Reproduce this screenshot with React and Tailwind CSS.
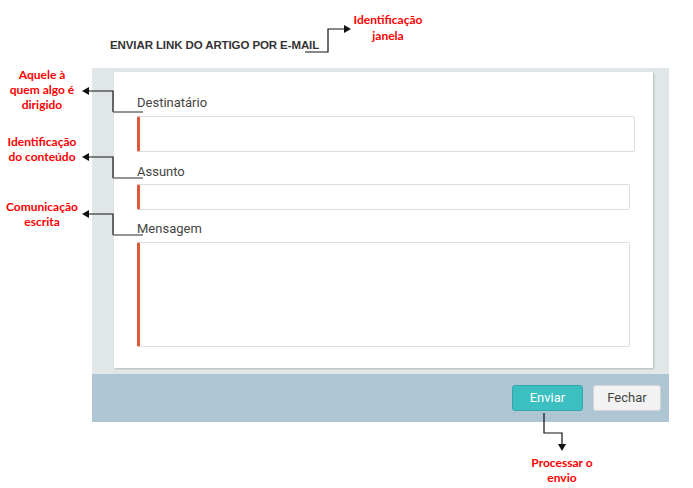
import React from 'react';

const Note = ({ className, children }) => (
    <div
        className={`absolute text-center text-[12px] leading-[15px] font-bold text-[#ff0000] ${className}`}
        style={{ fontFamily: 'Lato, "Liberation Sans", sans-serif' }}
    >
        {children}
    </div>
);

const Field = ({ label, className, boxClass }) => (
    <div className={className}>
        <label className="block text-[13px] leading-4 text-[#444]">{label}</label>
        <div className={`border border-[#dcdcdc] border-l-[3px] border-l-[#e0583a] rounded-[2px] bg-white ${boxClass}`} />
    </div>
);

const App = () => {
    return (
        <div className="relative w-[693px] h-[488px] bg-white" style={{ fontFamily: 'Roboto, "Liberation Sans", sans-serif' }}>
            <div className="h-[68px] pl-[110px] pt-[38px]">
                <h1 className="text-[11.5px] leading-[14px] font-bold text-[#333] tracking-[-0.1px]" style={{ fontFamily: '"Liberation Sans", Arial, sans-serif' }}>
                    ENVIAR LINK DO ARTIGO POR E-MAIL
                </h1>
            </div>

            <div className="ml-[92px] w-[577px]">
                <div className="bg-[#e1e6e9] pt-[4px] pl-[22px] pr-[16px] pb-[6px]">
                    <div className="bg-white h-[296px] pt-[23px] pl-[23px] shadow-[1px_1px_2px_rgba(0,0,0,0.2)]">
                        <Field label="Destinatário" boxClass="mt-[5px] w-[498px] h-[36px]" />
                        <Field label="Assunto" className="mt-[12px]" boxClass="mt-[4px] w-[493px] h-[26px]" />
                        <Field label="Mensagem" className="mt-[11px]" boxClass="mt-[5px] w-[493px] h-[105px]" />
                    </div>
                </div>
                <div className="bg-[#aec6d3] h-[48px] flex items-center justify-end gap-[10px] pr-[8px]">
                    <button className="w-[71px] h-[26px] rounded-[3px] bg-[#3bbfc0] border border-[#34a9aa] text-white text-[13px]">
                        Enviar
                    </button>
                    <button className="w-[68px] h-[26px] rounded-[3px] bg-[#f2f2f2] border border-[#d5d5d5] text-[#444] text-[13px]">
                        Fechar
                    </button>
                </div>
            </div>

            <svg className="absolute inset-0 pointer-events-none" width="693" height="488">
                <g fill="none" stroke="#111" strokeWidth="1.2">
                    <polyline points="305,52 328,52 328,29 345,29" />
                    <polyline points="113,112 113,91 88,91" />
                    <polyline points="113,178 113,157 88,157" />
                    <polyline points="113,235 113,214 88,214" />
                    <polyline points="544,413 544,433 562,433 562,445" />
                </g>
                <g fill="none" stroke="#666" strokeWidth="1.4">
                    <line x1="113" y1="112" x2="143" y2="112" />
                    <line x1="113" y1="178" x2="143" y2="178" />
                    <line x1="113" y1="235" x2="143" y2="235" />
                </g>
                <g fill="#111">
                    <polygon points="344,25 351,29 344,33" />
                    <polygon points="89,87 82,91 89,95" />
                    <polygon points="89,153 82,157 89,161" />
                    <polygon points="89,210 82,214 89,218" />
                    <polygon points="558,444 562,451 566,444" />
                </g>
            </svg>

            <Note className="left-[343px] top-[12px] w-[90px] leading-[16px]">Identificação<br />janela</Note>
            <Note className="left-0 top-[67px] w-[84px] leading-[14.5px]">Aquele à<br />quem algo é<br />dirigido</Note>
            <Note className="left-0 top-[134px] w-[84px]">Identificação<br />do conteúdo</Note>
            <Note className="left-0 top-[199px] w-[84px]">Comunicação<br />escrita</Note>
            <Note className="left-[517px] top-[455px] w-[90px] leading-[14px]">Processar o<br />envio</Note>
        </div>
    );
};

export default App;
